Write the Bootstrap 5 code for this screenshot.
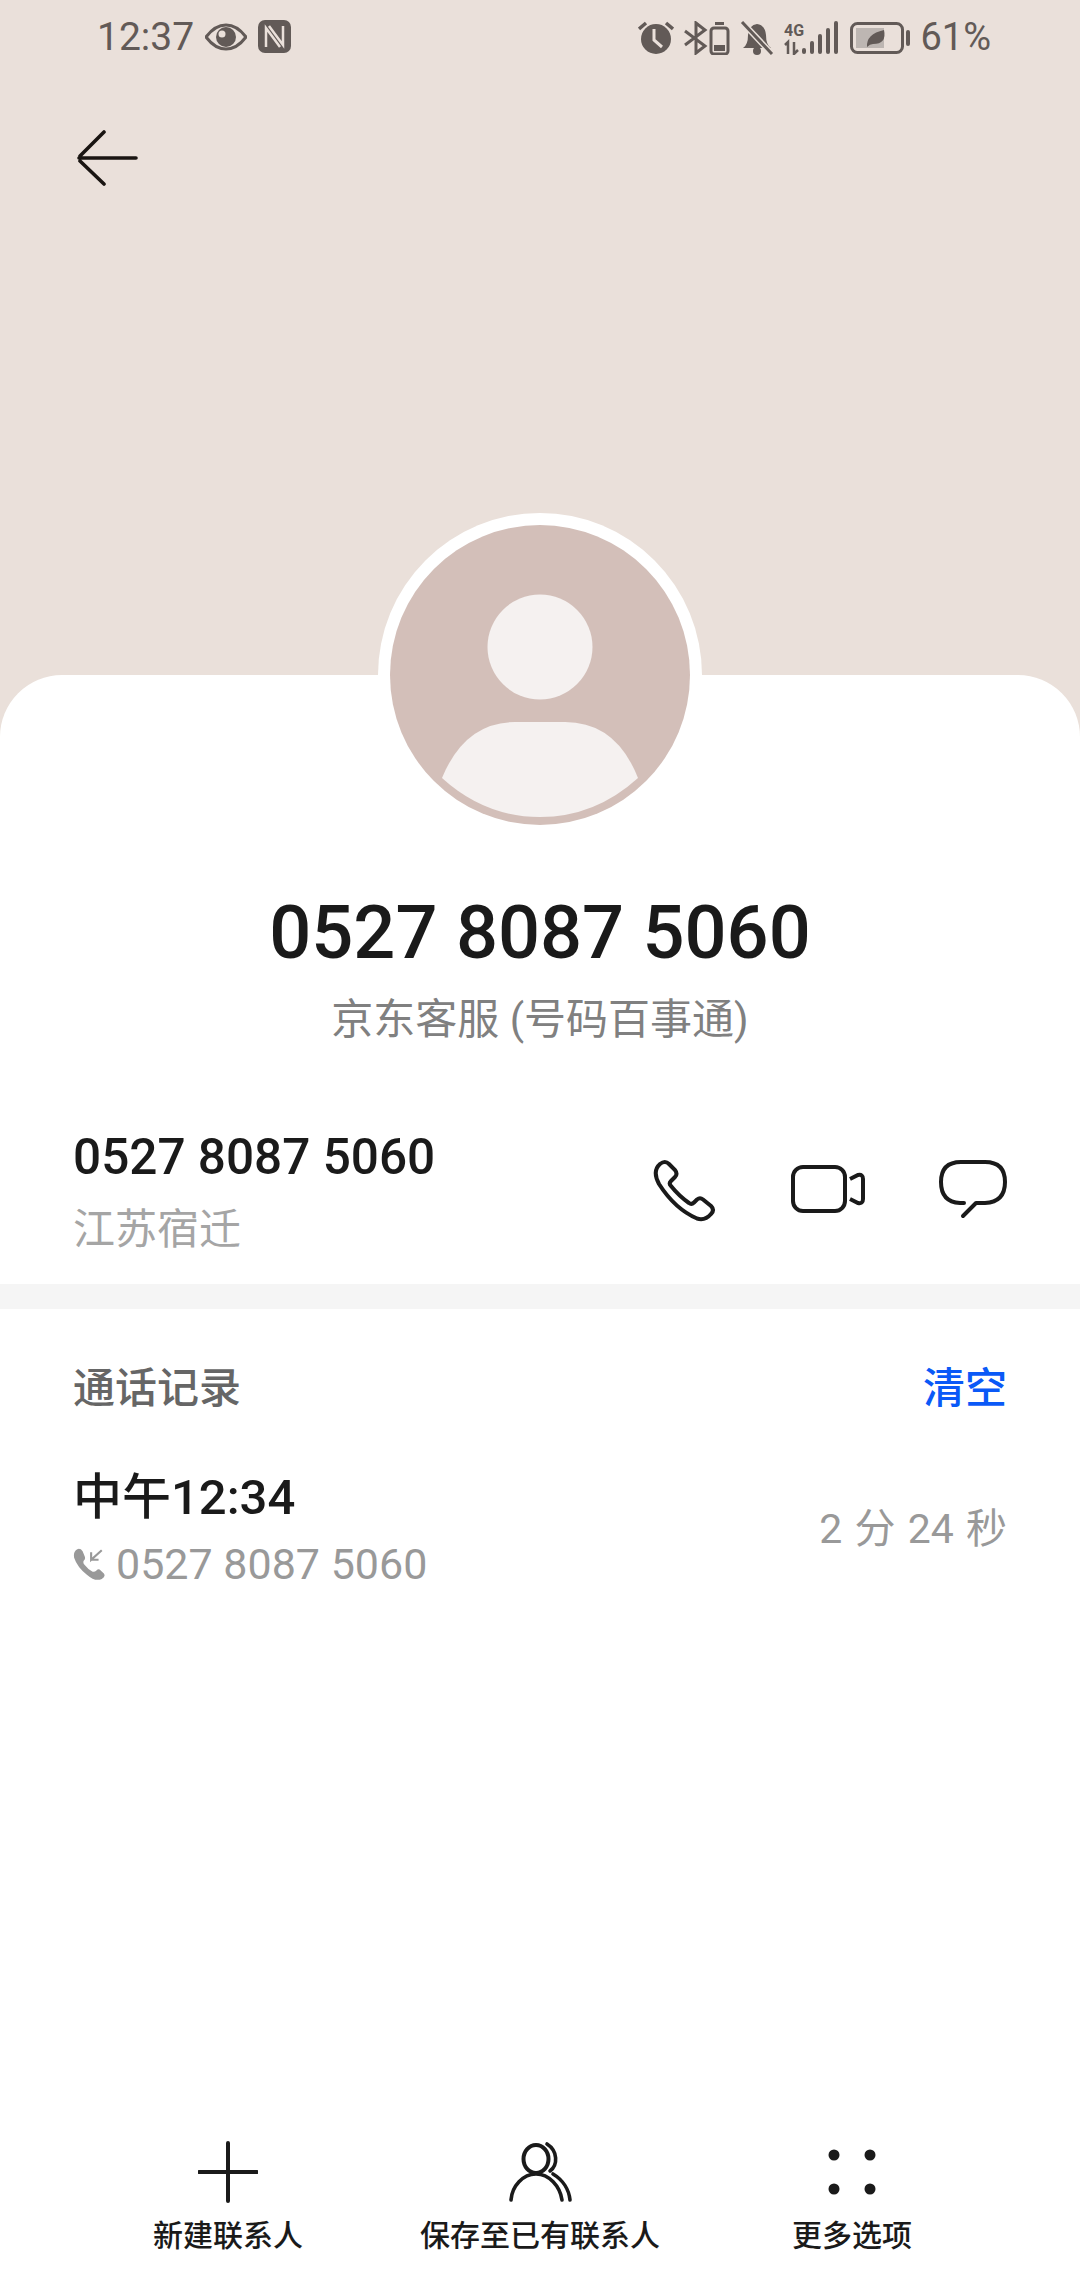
<!DOCTYPE html>
<html lang="zh">
<head>
    <meta charset="UTF-8">
    <meta name="viewport" content="width=device-width, initial-scale=1.0">
    <title>通话详情</title>
    <link href="https://cdn.jsdelivr.net/npm/bootstrap@5.3.0/dist/css/bootstrap.min.css" rel="stylesheet">
    <style>
        html, body { margin: 0; background: #fff; }
        .phone-page { width: 1080px; height: 2280px; background: #eae0da; overflow: hidden; font-family: Roboto, "Noto Sans CJK SC", sans-serif; color: #1a1a1a; }
        .status-row { height: 66px; padding: 0 89px 0 97px; color: #625a57; font-size: 39px; }
        .status-left { gap: 11px; }
        .status-right { gap: 10px; }
        .battery-pct { margin-left: -2px; font-size: 38px; }
        .back-row { height: 609px; padding: 64px 0 0 77px; }
        .sheet { background: #fff; border-radius: 62px 62px 0 0; }
        .avatar-ring { top: -162px; left: 378px; width: 324px; height: 324px; background: #fff; }
        .avatar-svg { display: block; margin: 12px; }
        .caller-block { padding-top: 208px; height: 420px; }
        .caller-number { font-size: 74px; font-weight: 500; line-height: 100px; }
        .caller-note { font-size: 42px; line-height: 56px; color: #808080; margin-top: 9px; }
        .number-row { height: 189px; padding: 0 73px 0 0; }
        .number-main { padding: 6px 0 0 73px; }
        .number-text { font-size: 49.500px; font-weight: 500; line-height: 64px; }
        .number-place { font-size: 42px; line-height: 60px; color: #a5a5a5; margin-top: 11px; }
        .band { height: 25px; background: #f5f5f5; }
        .log-head { padding: 50px 73px 0; height: 110px; font-size: 42px; line-height: 60px; }
        .log-title { color: #666; font-weight: 500; }
        .log-clear { color: #0a59f7; font-weight: 500; }
        .log-row { padding: 46px 73px 0; }
        .log-time { font-size: 49px; font-weight: 500; line-height: 66px; }
        .log-number { font-size: 43px; line-height: 60px; color: #999; margin-top: 3px; gap: 11px; }
        .log-length { font-size: 41px; color: #999; word-spacing: 2px; }
        .bottom-tools { padding: 0 72px 24px; }
        .tool-item { width: 312px; font-size: 30px; line-height: 40px; font-weight: 500; }
        .tool-item svg { display: block; height: 64px; margin: 0 auto 12px; }
    </style>
</head>
<body>
<div class="phone-page d-flex flex-column">
    <div class="status-row d-flex justify-content-between align-items-end">
        <div class="status-left d-flex align-items-center">
            <span>12:37</span>
            <svg width="42" height="28" viewBox="0 0 42 28"><path d="M1 14Q10 2 21 2T41 14Q32 26 21 26T1 14Z" fill="none" stroke="#625a57" stroke-width="3"/><circle cx="21" cy="14" r="10" fill="#625a57"/><circle cx="17" cy="11" r="3.500" fill="#eae0da"/></svg>
            <svg width="33" height="33" viewBox="0 0 33 33"><rect width="33" height="33" rx="7" fill="#625a57"/><path d="M8 27V8L22 27M25 6V25L11 6" fill="none" stroke="#eae0da" stroke-width="2.500"/></svg>
        </div>
        <div class="status-right d-flex align-items-center">
            <svg width="36" height="34" viewBox="0 0 36 34"><circle cx="18" cy="18" r="15" fill="#625a57"/><path d="M16 8V19L24 26" fill="none" stroke="#eae0da" stroke-width="3"/><path d="M1 8L8 2M35 8L28 2" stroke="#625a57" stroke-width="3.500"/></svg>
            <svg width="46" height="34" viewBox="0 0 46 34"><path d="M1 10L21 25L12 32V2L21 9L1 24" fill="none" stroke="#625a57" stroke-width="3"/><rect x="27" y="7" width="17" height="26" rx="3" fill="none" stroke="#625a57" stroke-width="3"/><rect x="31" y="1" width="9" height="3" fill="#625a57"/><rect x="30" y="24" width="11" height="6" fill="#625a57"/></svg>
            <svg width="34" height="34" viewBox="0 0 34 34"><path d="M3 27Q8 24 8 14Q9 4 17 3Q25 4 26 14Q26 24 31 27Z" fill="#625a57"/><circle cx="17" cy="30" r="4" fill="#625a57"/><path d="M2 1L32 33" stroke="#eae0da" stroke-width="6"/><path d="M2 1L32 33" stroke="#625a57" stroke-width="3"/></svg>
            <svg width="56" height="34" viewBox="0 0 56 34"><text x="0" y="15" font-family="Roboto, sans-serif" font-size="16" font-weight="700" fill="#625a57">4G</text><path d="M4 33V21L1 24M10 21V33L14 29" fill="none" stroke="#625a57" stroke-width="2.500"/><rect x="18" y="27" width="4" height="6" rx="2" fill="#625a57"/><rect x="26" y="20" width="4" height="13" rx="2" fill="#625a57"/><rect x="34" y="13" width="4" height="20" rx="2" fill="#625a57"/><rect x="42" y="7" width="4" height="26" rx="2" fill="#625a57"/><rect x="50" y="0" width="4" height="33" rx="2" fill="#625a57"/></svg>
            <svg width="62" height="34" viewBox="0 0 62 34"><rect x="1.500" y="2.500" width="51" height="29" rx="6" fill="none" stroke="#625a57" stroke-width="3"/><rect x="6" y="7" width="28" height="20" fill="#bdb6b2"/><path d="M17 26Q16 13 34 9Q37 23 23 23Q20 23 17 26Z" fill="#625a57"/><rect x="56" y="9" width="4" height="16" rx="2" fill="#625a57"/></svg>
            <span class="battery-pct">61%</span>
        </div>
    </div>

    <div class="back-row">
        <svg width="62" height="56" viewBox="0 0 62 56"><path d="M2 28H59M27 2L3 26M3 31L27 54" fill="none" stroke="#1a1512" stroke-width="3.600" stroke-linecap="round"/></svg>
    </div>

    <div class="sheet position-relative flex-grow-1 d-flex flex-column">
        <div class="avatar-ring position-absolute rounded-circle">
            <svg class="avatar-svg" width="300" height="300" viewBox="0 0 300 300">
                <circle cx="150" cy="150" r="150" fill="#d3bfb9"/>
                <circle cx="150" cy="122" r="52.500" fill="#f5f1f0"/>
                <path d="M52 253Q75 197 125 197H175Q226 197 248 253Q205 292 150 292Q95 292 52 253Z" fill="#f5f1f0"/>
            </svg>
        </div>

        <div class="caller-block text-center">
            <div class="caller-number">0527 8087 5060</div>
            <div class="caller-note">京东客服 (号码百事通)</div>
        </div>

        <div class="number-row d-flex justify-content-between align-items-center">
            <div class="number-main">
                <div class="number-text">0527 8087 5060</div>
                <div class="number-place">江苏宿迁</div>
            </div>
            <div class="d-flex align-items-center">
                <svg width="66" height="66" viewBox="0 0 66 66" style="margin-right:74px"><path d="M9 7Q14 3 18 7L24 13Q27 17 24 20L20 24Q17.500 26.500 20 29Q28 39 38 46Q40.500 48 43 45.500L46 42.500Q49 40 52 42.500L60 49Q64 53 60 57Q54 64 46 61.500Q24 52 8 27Q1 14 9 7Z" fill="none" stroke="#1a1a1a" stroke-width="4"/></svg>
                <svg width="74" height="50" viewBox="0 0 74 50" style="margin-right:74px"><rect x="2" y="2" width="52" height="44" rx="10" fill="none" stroke="#1a1a1a" stroke-width="4"/><path d="M59 14L67 10Q72 9 72 14V34Q72 39 67 38L59 34" fill="none" stroke="#1a1a1a" stroke-width="4"/></svg>
                <svg width="68" height="60" viewBox="0 0 68 60"><path d="M25 43H21Q2 42 2 22Q2 2 22 2H46Q66 2 66 22Q66 42 46 43H37L24 56" fill="none" stroke="#1a1a1a" stroke-width="4" stroke-linecap="round" stroke-linejoin="round"/></svg>
            </div>
        </div>

        <div class="band"></div>

        <div class="log-head d-flex justify-content-between">
            <span class="log-title">通话记录</span>
            <span class="log-clear">清空</span>
        </div>

        <div class="log-row d-flex justify-content-between align-items-center">
            <div>
                <div class="log-time">中午12:34</div>
                <div class="log-number d-flex align-items-center">
                    <svg width="32" height="34" viewBox="0 0 30 32"><path d="M4 2Q7 1 9 4L11 9Q12 11 10 13Q9 15 11 17Q14 21 18 23Q20 24 22 22Q24 20 26 22L29 25Q31 28 27 30Q21 33 13 26Q4 19 1 10Q0 4 4 2Z" fill="#999"/><path d="M27 3L17 12V5M17 12H24" fill="none" stroke="#999" stroke-width="2"/></svg>
                    <span>0527 8087 5060</span>
                </div>
            </div>
            <div class="log-length">2 分 24 秒</div>
        </div>

        <div class="bottom-tools d-flex mt-auto text-center">
            <div class="tool-item">
                <svg width="60" height="64" viewBox="0 0 60 64"><path d="M30 3V61M1 32H59" stroke="#1a1a1a" stroke-width="4" stroke-linecap="round"/></svg>
                新建联系人
            </div>
            <div class="tool-item">
                <svg width="66" height="64" viewBox="0 0 66 64"><ellipse cx="29" cy="19" rx="12.500" ry="14" fill="none" stroke="#1a1a1a" stroke-width="4"/><path d="M4 60C5 46 16 34 29 34C42 34 53 46 55 60M40 4C51 11 51 25 43 31M46 34C56 40 62 50 63 60" fill="none" stroke="#1a1a1a" stroke-width="3.600" stroke-linecap="round"/></svg>
                保存至已有联系人
            </div>
            <div class="tool-item">
                <svg width="60" height="64" viewBox="0 0 60 64"><circle cx="12" cy="15" r="5.500" fill="#1a1a1a"/><circle cx="48" cy="15" r="5.500" fill="#1a1a1a"/><circle cx="12" cy="49" r="5.500" fill="#1a1a1a"/><circle cx="48" cy="49" r="5.500" fill="#1a1a1a"/></svg>
                更多选项
            </div>
        </div>
    </div>
</div>
<script src="https://cdn.jsdelivr.net/npm/bootstrap@5.3.0/dist/js/bootstrap.bundle.min.js"></script>
</body>
</html>
